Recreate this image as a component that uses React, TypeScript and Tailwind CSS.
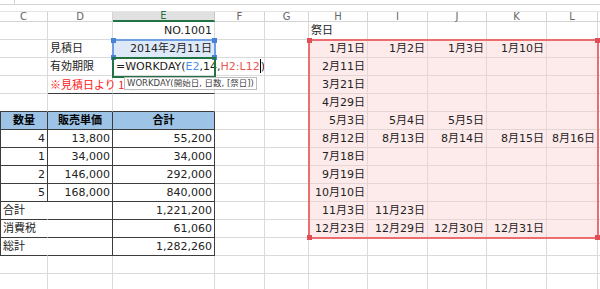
import React from "react";

type Cell = {
  t?: React.ReactNode;
  a?: "l" | "r" | "c";
  bg?: string;
  r?: string;
  b?: string;
  l?: string;
  x?: string;
};

const COLS = [
  { key: "C", w: "w-[48px]" },
  { key: "D", w: "w-[65px]" },
  { key: "E", w: "w-[102px]" },
  { key: "F", w: "w-[50px]" },
  { key: "G", w: "w-[44px]" },
  { key: "H", w: "w-[59px]" },
  { key: "I", w: "w-[60px]" },
  { key: "J", w: "w-[59px]" },
  { key: "K", w: "w-[60px]" },
  { key: "L", w: "w-[51px]" },
  { key: "M", w: "w-[20px]" },
];

const DARK_R = "border-r-[#3c3c3c]";
const DARK_B = "border-b-[#3c3c3c]";
const DARK_L = "border-l border-l-[#3c3c3c]";
const HEAD_BG = "bg-[#9dc3e6]";

const sheet: Record<string, Cell> = {
  E1: { t: "NO.1001", a: "r" },
  D2: { t: "見積日" },
  E2: { t: "2014年2月11日", a: "r", bg: "bg-[#dde9f8]" },
  D3: { t: "有効期限" },
  E3: {
    t: (
      <span className="pl-[1px]">
        {"=WORKDAY("}
        <span className="text-[#4f8fe6]">E2</span>
        {",14,"}
        <span className="text-[#ea5555]">H2:L12</span>
        <span className="inline-block w-px h-[14px] bg-black align-[-3px]" />
        {")"}
      </span>
    ),
  },
  D4: {
    t: <span className="font-['Noto_Sans_CJK_JP',sans-serif]">※見積日より 14営業日後に失効</span>,
    x: "text-[#ff2020]",
    b: DARK_B,
  },
  E4: { b: DARK_B },
  C5: { b: DARK_B },
  D5: { b: DARK_B },
  E5: { b: DARK_B },
  C6: { t: "数量", a: "c", bg: HEAD_BG, r: DARK_R, b: DARK_B, l: DARK_L, x: "font-bold" },
  D6: { t: "販売単価", a: "c", bg: HEAD_BG, r: DARK_R, b: DARK_B, x: "font-bold" },
  E6: { t: "合計", a: "c", bg: HEAD_BG, r: DARK_R, b: DARK_B, x: "font-bold" },
  H1: { t: "祭日" },
};

const items = [
  ["4", "13,800", "55,200"],
  ["1", "34,000", "34,000"],
  ["2", "146,000", "292,000"],
  ["5", "168,000", "840,000"],
];
items.forEach((it, i) => {
  const row = 7 + i;
  sheet["C" + row] = { t: it[0], a: "r", r: DARK_R, b: DARK_B, l: DARK_L };
  sheet["D" + row] = { t: it[1], a: "r", r: DARK_R, b: DARK_B };
  sheet["E" + row] = { t: it[2], a: "r", r: DARK_R, b: DARK_B };
});

const totals = [
  ["合計", "1,221,200"],
  ["消費税", "61,060"],
  ["総計", "1,282,260"],
];
totals.forEach((it, i) => {
  const row = 11 + i;
  sheet["C" + row] = { t: it[0], r: "border-r-white", b: DARK_B, l: DARK_L };
  sheet["D" + row] = { r: DARK_R, b: DARK_B };
  sheet["E" + row] = { t: it[1], a: "r", r: DARK_R, b: DARK_B };
});

const holidays = [
  ["1月1日", "1月2日", "1月3日", "1月10日", ""],
  ["2月11日"],
  ["3月21日"],
  ["4月29日"],
  ["5月3日", "5月4日", "5月5日"],
  ["8月12日", "8月13日", "8月14日", "8月15日", "8月16日"],
  ["7月18日"],
  ["9月19日"],
  ["10月10日"],
  ["11月3日", "11月23日"],
  ["12月23日", "12月29日", "12月30日", "12月31日"],
];
const pinkCols = ["H", "I", "J", "K", "L"];
holidays.forEach((list, i) => {
  const row = 2 + i;
  pinkCols.forEach((c, j) => {
    sheet[c + row] = {
      t: list[j] || "",
      a: "r",
      bg: "bg-[#fdeaea]",
      r: "border-r-[#e6d5d5]",
      b: "border-b-[#e6d5d5]",
    };
  });
});

const ROWS = Array.from({ length: 15 }, (_, i) => i + 1);

function SheetCell({ col, w, row }: { col: string; w: string; row: number }) {
  const c = sheet[col + row] || {};
  const align =
    c.a === "r" ? "justify-end pr-[2px]" : c.a === "c" ? "justify-center" : "justify-start pl-[2px]";
  return (
    <div
      className={`relative shrink-0 h-[18px] flex items-center border-r border-b ${w} ${align} ${
        c.r || "border-r-[#dadada]"
      } ${c.b || "border-b-[#dadada]"} ${c.l || ""} ${c.bg || ""} ${c.x || "text-[#222]"}`}
    >
      {c.t && <span className="whitespace-nowrap">{c.t}</span>}
    </div>
  );
}

function Handles({ color }: { color: string }) {
  return (
    <>
      <div className={`absolute -left-[3px] -top-[3px] w-[5px] h-[5px] ${color}`} />
      <div className={`absolute -right-[3px] -top-[3px] w-[5px] h-[5px] ${color}`} />
      <div className={`absolute -left-[3px] -bottom-[3px] w-[5px] h-[5px] ${color}`} />
      <div className={`absolute -right-[3px] -bottom-[3px] w-[5px] h-[5px] ${color}`} />
    </>
  );
}

export default function App() {
  return (
    <div
      className="relative w-[600px] h-[289px] overflow-hidden bg-white text-[11px] leading-[17px]"
      style={{ fontFamily: '"DejaVu Sans", "Noto Sans CJK JP", sans-serif' }}
    >
      {/* formula bar edge */}
      <div className="h-[5px] border-b border-[#d4d4d4] flex">
        <div className="w-[15px] border-r border-[#d4d4d4]" />
      </div>
      <div className="h-[6px]" />

      {/* column headers */}
      <div className="flex h-[11px] border-t border-[#e4e4e4]">
        {COLS.map((c) =>
          c.key === "E" ? (
            <div
              key={c.key}
              className={`${c.w} shrink-0 flex items-center justify-center bg-[#e1e1e1] border-r border-[#c8c8c8] border-b-2 border-b-[#217346] text-[#217346] text-[10px] leading-none`}
            >
              {c.key}
            </div>
          ) : (
            <div
              key={c.key}
              className={`${c.w} shrink-0 flex items-center justify-center border-r border-b border-[#d4d4d4] text-[#666] text-[10px] leading-none`}
            >
              {c.key === "M" ? "" : c.key}
            </div>
          )
        )}
      </div>

      {/* grid */}
      {ROWS.map((r) => (
        <div key={r} className="flex">
          {COLS.map((c) => (
            <SheetCell key={c.key} col={c.key} w={c.w} row={r} />
          ))}
        </div>
      ))}

      {/* E2 reference highlight */}
      <div className="absolute left-[112px] top-[39px] w-[104px] h-[20px] border-2 border-[#6f9ee2]">
        <Handles color="bg-[#4a80d6]" />
      </div>

      {/* active cell E3 */}
      <div className="absolute left-[112px] top-[57px] w-[104px] h-[21px] border-2 border-[#217346]" />

      {/* H2:L12 reference highlight */}
      <div className="absolute left-[308px] top-[39px] w-[291px] h-[200px] border-2 border-[#ec6d6d]">
        <Handles color="bg-[#e04f55]" />
      </div>

      {/* function tooltip */}
      <div className="absolute left-[124px] top-[77px] h-[13px] px-[2px] flex items-center bg-white border border-[#bdbdbd] text-[8.5px] leading-none text-[#444] whitespace-nowrap">
        WORKDAY(開始日, 日数, [祭日])
      </div>
    </div>
  );
}
